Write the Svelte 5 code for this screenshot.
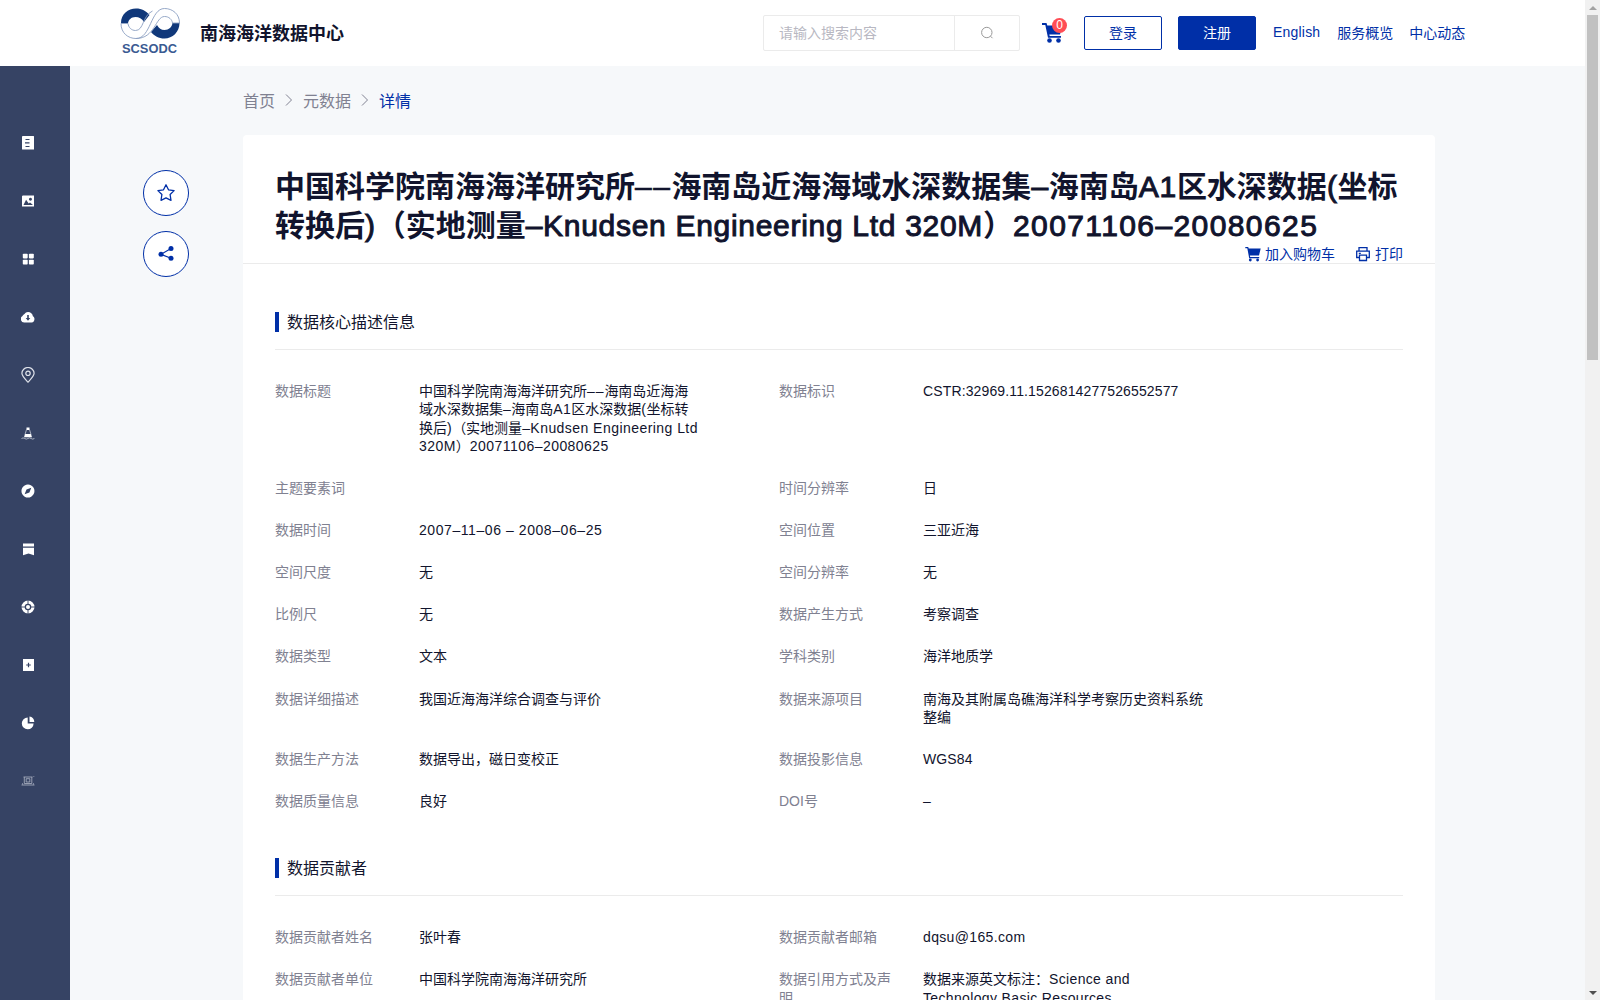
<script>
	// 左侧菜单图标
	const menus = ['doc', 'image', 'grid', 'cloud', 'pin', 'buoy', 'compass', 'bookmark', 'wheel', 'plus', 'pie', 'station'];

	// 数据核心描述信息
	const core = [
		['数据标题', '中国科学院南海海洋研究所––海南岛近海海\n域水深数据集–海南岛A1区水深数据(坐标转\n换后)（实地测量–Knudsen Engineering Ltd\n320M）20071106–20080625'],
		['数据标识', 'CSTR:32969.11.1526814277526552577', 'code'],
		['主题要素词', ''],
		['时间分辨率', '日'],
		['数据时间', '2007–11–06 – 2008–06–25', 'date'],
		['空间位置', '三亚近海'],
		['空间尺度', '无'],
		['空间分辨率', '无'],
		['比例尺', '无'],
		['数据产生方式', '考察调查'],
		['数据类型', '文本'],
		['学科类别', '海洋地质学'],
		['数据详细描述', '我国近海海洋综合调查与评价'],
		['数据来源项目', '南海及其附属岛礁海洋科学考察历史资料系统\n整编'],
		['数据生产方法', '数据导出，磁日变校正'],
		['数据投影信息', 'WGS84', 'code'],
		['数据质量信息', '良好'],
		['DOI号', '–']
	];

	// 数据贡献者
	const contributor = [
		['数据贡献者姓名', '张叶春'],
		['数据贡献者邮箱', 'dqsu@165.com', 'mail'],
		['数据贡献者单位', '中国科学院南海海洋研究所'],
		['数据引用方式及声\n明', '数据来源英文标注：Science and\nTechnology Basic Resources', 'mail']
	];

	const sections = [
		{ title: '数据核心描述信息', rows: core },
		{ title: '数据贡献者', rows: contributor }
	];

	const titleLines = [
		'中国科学院南海海洋研究所––海南岛近海海域水深数据集–海南岛A1区水深数据(坐标',
		'转换后)（实地测量–Knudsen Engineering Ltd 320M）20071106–20080625'
	];

	// 把西文和中文拆开，西文单独设置字距
	function split(text) {
		return text.split(/(––|[\x20-\x7e–]+)/).filter(Boolean).map((part) => ({
			part,
			kind: part === '––' ? 'latin dash' : /^[\x20-\x7e–]/.test(part) ? (/^\d/.test(part) ? 'latin num' : 'latin') : ''
		}));
	}
</script>

{#snippet mixed(text)}{#each split(text) as { part, kind }}{#if kind}<span class={kind}>{part}</span>{:else}{part}{/if}{/each}{/snippet}

<div class="page">
	<div class="main">
		<header>
			<svg class="logo" width="60" height="48" viewBox="0 0 60 48">
				<path d="M1 16C1 7 8 1.500 16 1.500c6 0 10 2.500 13.500 6.500L24 15c-2-3.500-5-5-8.500-5C11 10 8.500 13 8 16z" fill="#10387a" />
				<path d="M59.500 16c0 9-7 15.500-15 15.500-6 0-10-2.500-13.500-6.500l6-7c2 3.500 4 5 7.500 5 4.500 0 7.500-3 8-7z" fill="#10387a" />
				<path d="M1 16.500C1 26 8 31.500 16 31.500c15 0 14.500-30 28.500-30 8 0 15 5.500 15 14.500H52.500c-.5-3.500-3.500-6.500-8-6.500-9 0-9.500 22-28.500 22M1 16.500h7c.5 4 3.500 7 7.500 7C24 23.500 22 9 32.500 4" fill="none" stroke="#8b9fc2" stroke-width=".9" />
				<text x="2" y="45.500" textLength="55" lengthAdjust="spacingAndGlyphs">SCSODC</text>
			</svg>
			<div class="site">南海海洋数据中心</div>
			<div class="search">
				<span class="placeholder">请输入搜索内容</span>
				<span class="search-btn">
					<svg width="14" height="14" viewBox="0 0 14 14" fill="none" stroke="#999" stroke-width="1">
						<circle cx="6.800" cy="6.500" r="5.200" />
						<path d="M10.500 10.200l2 2" />
					</svg>
				</span>
			</div>
			<div class="cart">
				<svg width="22" height="21" viewBox="0 0 22 21">
					<path d="M0 1h4.500l.8 2.500H20L18 12.500H7.300l.4 1.500H19v1.700H6L3.300 3H0z" fill="#002fa7" />
					<circle cx="7.500" cy="18.500" r="2.300" fill="#002fa7" />
					<circle cx="16.500" cy="18.500" r="2.300" fill="#002fa7" />
				</svg>
				<span class="badge">0</span>
			</div>
			<button class="login">登录</button>
			<button class="register">注册</button>
			<nav>
				<a href="#en" class="en">English</a>
				<a href="#service">服务概览</a>
				<a href="#news">中心动态</a>
			</nav>
		</header>

		<div class="body">
			<aside>
				{#each menus as name}
					<svg width="14" height="16" viewBox="0 0 14 16" fill="#fff">
						{#if name === 'doc'}
							<path fill-rule="evenodd" d="M2 1h10.500q.5 0 .5.500v13H1.500q-.5 0-.5-.5V1.500Q1 1 2 1zM4.500 4v1h4V4zM4 7.200v1.200h4.500V7.200zM4.500 11v1h4v-1z" />
						{:else if name === 'image'}
							<path fill-rule="evenodd" d="M1.700 2.500H13v11H1V3.200zM2.500 12H12L9 9.500l-1.300 1-2.600-3.700zM9.400 4.700a1.500 1.500 0 1 0 .1 0z" />
						{:else if name === 'grid'}
							<rect x="1.800" y="2.700" width="4.900" height="4.700" rx=".8" />
							<rect x="7.900" y="2.700" width="4.900" height="4.700" rx=".8" />
							<rect x="1.800" y="8.800" width="4.900" height="4.700" rx=".8" />
							<rect x="7.900" y="8.800" width="4.900" height="4.700" rx=".8" />
						{:else if name === 'cloud'}
							<path fill-rule="evenodd" d="M3.500 13.500A3.500 3.500 0 0 1 1.500 7C2 5.500 3 5.500 3.500 5 4.300 3.700 5.500 3 7 3c2.500 0 4.700 2 4.900 4.200 2.700 1.300 1.700 6.300-1.300 6.300zM6.200 6v3H4.700L7 11.700 9.300 9H7.800V6z" />
						{:else if name === 'pin'}
							<path d="M7 15.200C4 12 .9 9 .9 6.300a6.100 5.800 0 0 1 12.200 0C13.100 9 10 12 7 15.200z" fill="none" stroke="#dfe2ea" stroke-width="1.200" />
							<circle cx="7" cy="6.300" r="2.200" fill="none" stroke="#dfe2ea" stroke-width="1.200" />
						{:else if name === 'buoy'}
							<path d="M5.500 2.500h3v2.500h-3zM4 9h6l1 3.200H3z" />
							<path d="M5.500 4.500L4 9.500M8.500 4.500L10 9.500M.5 13.500q1.600-1.200 3.200 0t3.200 0 3.200 0 3.300 0" fill="none" stroke="#c5cad6" stroke-width=".8" />
						{:else if name === 'compass'}
							<path fill-rule="evenodd" d="M7 1.500a6.500 6.500 0 1 1-.1 0zM10.300 4.700L5.500 6.600 3.600 11.200 8.400 9.500z" />
						{:else if name === 'bookmark'}
							<path d="M2 2.500h11v3H2zM2 6.700h11v7.500L7.500 12.500 2 14.200z" />
						{:else if name === 'wheel'}
							<circle cx="7" cy="8" r="4.900" fill="none" stroke="#fff" stroke-width="3.200" />
							<circle cx="7" cy="8" r="2" />
							<path d="M7 1v4M7 11v4M0 8h4M10 8h4" stroke="#364364" stroke-width=".9" />
						{:else if name === 'plus'}
							<path fill-rule="evenodd" d="M2 2h11v12H2zM6.900 5.700v1.700H5.200v1.200h1.700v1.700h1.200V8.600h1.700V7.400H8.100V5.700z" />
						{:else if name === 'pie'}
							<path d="M6.700 2.500V8.500h5.900A5.900 5.900 0 1 1 6.700 2.500zM8.500 1.500A5.400 5.400 0 0 1 13.300 7H8.500z" />
						{:else}
							<path d="M2.500 4h9M3.300 4V10.500h7.500V4M5.200 5.700h3.600v3.300H5.200zM.5 12h13" fill="none" stroke="#b0b6c5" stroke-width=".8" />
							<path d="M1.500 10v2M12.800 3v1M12.500 10v2" stroke="#8f98ae" stroke-width=".8" />
						{/if}
					</svg>
				{/each}
			</aside>

			<div class="tools">
				<div class="circle">
					<svg width="20" height="20" viewBox="0 0 20 20" fill="none" stroke="#002fa7" stroke-width="1.300" stroke-linejoin="round">
						<path d="M10 1.800l2.500 5 5.600.8-4 3.900.9 5.800-5-2.500-5 2.500.9-5.800-4-3.900 5.600-.8z" />
					</svg>
				</div>
				<div class="circle">
					<svg width="18" height="18" viewBox="0 0 18 18" fill="#002fa7">
						<path d="M14 3.500L4 9.300l10 3.900" fill="none" stroke="#002fa7" stroke-width="1.200" />
						<circle cx="4" cy="9.300" r="2.500" />
						<circle cx="14" cy="3.500" r="2.500" />
						<circle cx="14" cy="13.300" r="2.500" />
					</svg>
				</div>
			</div>

			<main>
				<div class="crumb">
					<span>首页</span>
					<svg width="8" height="12" viewBox="0 0 8 12"><path d="M1 .5l5.500 5.500L1 11.500" /></svg>
					<span>元数据</span>
					<svg width="8" height="12" viewBox="0 0 8 12"><path d="M1 .5l5.500 5.500L1 11.500" /></svg>
					<span class="now">详情</span>
				</div>

				<div class="card">
					<div class="head">
						<h1>{@render mixed(titleLines[0])}<br />{@render mixed(titleLines[1])}</h1>
						<div class="actions">
							<span class="action">
								<svg width="16" height="16" viewBox="0 0 16 16" fill="#002fa7">
									<path d="M.3 1h2.900l.5 1.500h12L14 9.500H4.900l.3 1.500h9v1.200H4.200L2.300 2.200H.3z" />
									<circle cx="5.300" cy="14" r="1.400" />
									<circle cx="12.600" cy="14" r="1.400" />
								</svg>
								加入购物车
							</span>
							<span class="action">
								<svg width="16" height="16" viewBox="0 0 16 16" fill="none" stroke="#002fa7" stroke-width="1.300">
									<path d="M4 5V1.700h8V5M4 11.500H1.700V5.200h12.600v6.300H12M4.500 9.200h7v5.300h-7zM3.800 7.300h2" />
								</svg>
								打印
							</span>
						</div>
					</div>

					{#each sections as section}
						<section>
							<h2><span>{section.title}</span></h2>
							<div class="rows">
								{#each section.rows as [label, value, kind]}
									<div class="item">
										<div class="label">{label}</div>
										<div class="value {kind ?? ''}">{@render mixed(value)}</div>
									</div>
								{/each}
							</div>
						</section>
					{/each}
				</div>
			</main>
		</div>
	</div>

	<div class="scrollbar">
		<i class="up"></i>
		<div class="thumb"></div>
		<i class="down"></i>
	</div>
</div>

<style>
	:global(body) {
		overflow: hidden;
	}

	.page {
		display: flex;
		height: 1000px;
		overflow: hidden;
		background: #f6f8fa;
		color: #11142d;
		font-family: "Liberation Sans", "Noto Sans CJK SC", sans-serif;
		font-size: 14px;
	}

	.main {
		width: 1585px;
		height: 1000px;
		overflow: hidden;
	}

	/* 顶部导航 */
	header {
		display: flex;
		align-items: center;
		box-sizing: border-box;
		height: 66px;
		padding-left: 120px;
		background: #fff;
	}

	.logo {
		margin-top: -5px;
	}

	.logo text {
		font-family: "Liberation Sans", sans-serif;
		font-size: 12px;
		font-weight: bold;
		fill: #3a5a92;
	}

	.site {
		box-sizing: border-box;
		width: 583px;
		margin-top: -2px;
		padding-left: 20px;
		font-size: 18px;
		font-weight: bold;
	}

	.search {
		display: flex;
		box-sizing: border-box;
		width: 257px;
		height: 36px;
		border: 1px solid #ebebeb;
		border-radius: 2px;
	}

	.placeholder {
		width: 191px;
		box-sizing: border-box;
		padding-left: 15px;
		line-height: 34px;
		color: #b8b8c2;
		border-right: 1px solid #ebebeb;
	}

	.search-btn {
		flex: 1;
		display: flex;
		align-items: center;
		justify-content: center;
	}

	.cart {
		position: relative;
		width: 22px;
		height: 21px;
		margin: -1px 20px 0 22px;
	}

	.badge {
		position: absolute;
		top: -4px;
		left: 10px;
		width: 15px;
		height: 15px;
		border-radius: 50%;
		background: #ff4d55;
		color: #fff;
		font-size: 12px;
		line-height: 15px;
		text-align: center;
	}

	button {
		width: 78px;
		height: 34px;
		padding: 0 0 2px;
		border: 1px solid #002fa7;
		border-radius: 2px;
		background: #fff;
		color: #002fa7;
		font: inherit;
	}

	.register {
		margin-left: 16px;
		background: #002fa7;
		color: #fff;
	}

	nav {
		display: flex;
		align-items: center;
		gap: 16px;
		margin: -2px 0 0 17px;
	}

	nav a {
		color: #002fa7;
		text-decoration: none;
	}

	nav .en {
		margin-right: 1px;
		letter-spacing: 0.2px;
	}

	.body {
		display: flex;
		height: 934px;
	}

	/* 左侧菜单 */
	aside {
		display: flex;
		flex-direction: column;
		gap: 42px;
		width: 70px;
		box-sizing: border-box;
		padding: 69px 0 0 21px;
		background: #364364;
	}

	aside svg {
		flex: none;
	}

	.tools {
		width: 100px;
		padding: 104px 0 0 73px;
	}

	.circle {
		display: flex;
		align-items: center;
		justify-content: center;
		box-sizing: border-box;
		width: 46px;
		height: 46px;
		margin-bottom: 15px;
		border: 1px solid #002fa7;
		border-radius: 50%;
		background: #fff;
	}

	main {
		width: 1192px;
	}

	.crumb {
		display: flex;
		align-items: center;
		box-sizing: border-box;
		height: 69px;
		padding-bottom: 2px;
		gap: 10px;
		font-size: 16px;
		color: #808191;
	}

	.crumb svg {
		margin-top: 1px;
		fill: none;
		stroke: #808191;
	}

	.crumb .now {
		color: #002fa7;
	}

	.card {
		height: 1200px;
		border-radius: 4px 4px 0 0;
		background: #fff;
	}

	.head {
		box-sizing: border-box;
		height: 129px;
		padding: 32px 32px 0;
		border-bottom: 1px solid #ebebeb;
	}

	h1 {
		margin: 0;
		font-size: 30px;
		line-height: 39px;
		height: 78px;
		white-space: nowrap;
	}

	h1 .latin {
		font-weight: normal;
		letter-spacing: 0.7px;
		-webkit-text-stroke: 1px #11142d;
	}

	h1 .num {
		letter-spacing: 1.4px;
	}

	h1 .dash {
		letter-spacing: 1.5px;
		-webkit-text-stroke: 0.6px #11142d;
	}

	.actions {
		display: flex;
		justify-content: flex-end;
		gap: 20px;
		color: #002fa7;
		line-height: 18px;
	}

	.action {
		display: flex;
		align-items: center;
		gap: 4px;
	}

	/* 信息区块 */
	section {
		margin: 0 32px;
		padding-top: 37px;
	}

	h2 {
		display: flex;
		align-items: center;
		box-sizing: border-box;
		height: 49px;
		margin: 0;
		padding-bottom: 7px;
		border-bottom: 1px solid #ebebeb;
		font-size: 16px;
		font-weight: normal;
	}

	h2 span {
		margin-bottom: 2px;
	}

	h2::before {
		content: '';
		width: 4px;
		height: 20px;
		margin-right: 8px;
		background: #002fa7;
	}

	.rows {
		display: grid;
		grid-template-columns: 504px 504px;
		row-gap: 23.65px;
		padding-top: 32px;
		line-height: 18.4px;
	}

	.item {
		display: flex;
		min-height: 18.4px;
		white-space: pre;
	}

	.label {
		flex: none;
		width: 144px;
		color: #808191;
	}

	.value .latin {
		letter-spacing: 0.45px;
	}

	.value .dash {
		letter-spacing: 0.9px;
	}

	.code .latin {
		letter-spacing: 0.13px;
	}

	.date .latin {
		letter-spacing: 0.57px;
	}

	.mail .latin {
		letter-spacing: 0.35px;
	}

	/* 滚动条 */
	.scrollbar {
		display: flex;
		flex-direction: column;
		align-items: center;
		width: 15px;
		background: #f1f1f1;
	}

	.up,
	.down {
		border: 4px solid transparent;
	}

	.up {
		border-top: 0;
		border-bottom-color: #a3a3a3;
		margin: 6px 0 5px;
	}

	.down {
		border-bottom: 0;
		border-top-color: #505050;
		margin: auto 0 5px;
	}

	.thumb {
		width: 11px;
		height: 345px;
		background: #c1c1c1;
	}
</style>
